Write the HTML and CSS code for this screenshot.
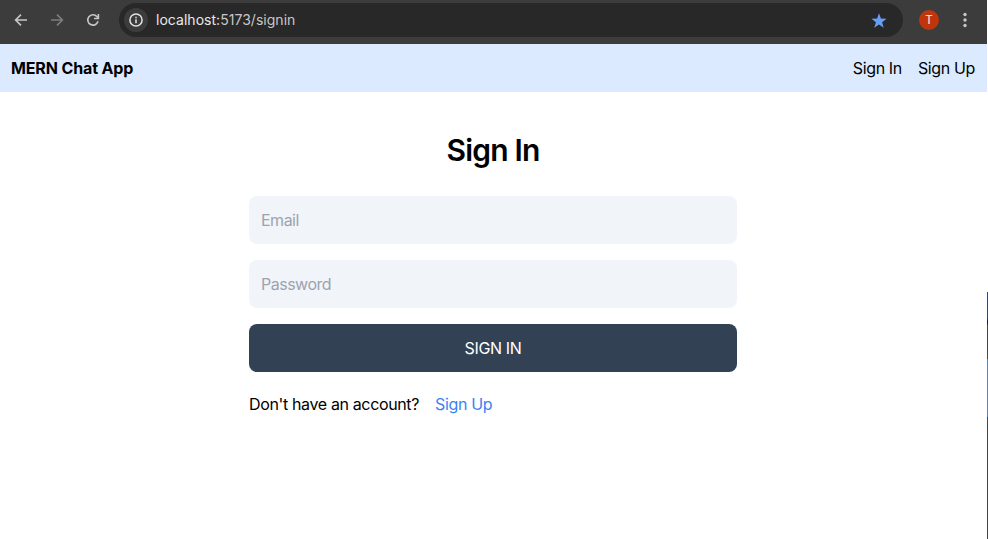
FILE: index.html
```html
<!DOCTYPE html>
<html lang="en">
<head>
<meta charset="utf-8">
<title>MERN Chat App</title>
<link rel="stylesheet" href="styles.css">
</head>
<body>
<div class="window">
  <div class="toolbar">
    <svg class="nav-icon" viewBox="0 0 16 16"><path d="M14 8H3M8 2.6 2.6 8 8 13.4"/></svg>
    <svg class="nav-icon disabled" viewBox="0 0 16 16"><path d="M2 8h11M8 2.6 13.4 8 8 13.4"/></svg>
    <svg class="nav-icon" viewBox="0 0 16 16"><path d="M13 9.3A5.2 5.2 0 1 1 11.9 4.5L13.4 6M13.4 2v4.5H9"/></svg>
    <div class="address">
      <span class="info"><svg viewBox="0 0 14 14"><circle cx="7" cy="7" r="6.1"/><path d="M7 6.3v4M7 3.7v1.5"/></svg></span>
      <span class="url"><b>localhost:</b>5173/signin</span>
      <svg class="star" viewBox="0 0 16 16"><path d="M8 .3 9.9 5.6l5.7.2-4.5 3.5 1.6 5.5L8 11.6l-4.7 3.2 1.6-5.5L.4 5.8l5.7-.2z"/></svg>
    </div>
    <span class="avatar">T</span>
    <svg class="menu" viewBox="0 0 4 16"><circle cx="2" cy="2.5" r="1.7"/><circle cx="2" cy="8" r="1.7"/><circle cx="2" cy="13.5" r="1.7"/></svg>
  </div>
  <header class="header">
    <h1 class="brand">MERN Chat App</h1>
    <nav class="links"><a class="signin">Sign In</a><a class="signup">Sign Up</a></nav>
  </header>
  <main class="content">
    <h2 class="title">Sign In</h2>
    <form class="form">
      <input class="field" type="email" placeholder="Email">
      <input class="field" type="password" placeholder="Password">
      <button class="submit" type="button">SIGN IN</button>
    </form>
    <div class="prompt"><span class="question">Don't have an account?</span><a class="signup accent">Sign Up</a></div>
  </main>
</div>
<div class="edge"></div>
</body>
</html>
```
FILE: styles.css
```css
* { box-sizing: border-box; }
body {
  margin: 0;
  height: 539px;
  overflow: hidden;
  display: flex;
  background: #fff;
  color: #000;
  font: 16px/24px Inter, "Liberation Sans", sans-serif;
  letter-spacing: -0.36px;
}
.window { width: 987px; }
.edge {
  width: 1px;
  background: linear-gradient(#fff 292px, #3b4080 292px 318px, #10101c 322px, #444 326px 359px, #4a88d4 359px 417px, #444 417px);
}
.toolbar {
  height: 44px;
  background: #3c3c3c;
  display: flex;
  align-items: center;
  padding: 0 20px 4px 13px;
  letter-spacing: 0;
}
.nav-icon {
  width: 16px;
  height: 16px;
  margin-right: 20px;
  fill: none;
  stroke: #c7c7c7;
  stroke-width: 1.6;
}
.nav-icon.disabled { stroke: #7d7d7d; }
.address {
  width: 784px;
  height: 34px;
  margin-left: -2px;
  border-radius: 17px;
  background: #282828;
  display: flex;
  align-items: center;
  padding: 0 16px 0 5px;
}
.info {
  width: 24px;
  height: 24px;
  border-radius: 50%;
  background: #3c3c3c;
  display: flex;
  align-items: center;
  justify-content: center;
}
.info svg { width: 14px; height: 14px; fill: none; stroke: #e3e3e3; stroke-width: 1.5; }
.url { margin-left: 8px; flex: 1; font-size: 14px; letter-spacing: 0.03px; color: #c7c7c7; }
.url b { font-weight: 400; color: #e8e8e8; }
.star { width: 16px; height: 16px; fill: #669df6; margin-top: 1px; }
.avatar {
  width: 20px;
  height: 20px;
  margin-left: 16px;
  border-radius: 50%;
  background: #bf360c;
  color: #f3d8cf;
  font-size: 11.5px;
  font-weight: 500;
  line-height: 20px;
  text-align: center;
}
.menu { width: 4px; height: 16px; margin-left: auto; fill: #c7c7c7; }
.header {
  height: 48px;
  padding: 0 12px 0 11px;
  background: #dbeafe;
  display: flex;
  align-items: center;
  justify-content: space-between;
}
.brand { margin: 0; font-size: 16px; font-weight: 700; line-height: 24px; letter-spacing: -0.13px; }
.links { display: flex; gap: 16px; }
.content { width: 488px; margin: 0 auto; padding: 40px 0 0; position: relative; left: -0.5px; }
.title { margin: 0; font-size: 30px; line-height: 36px; font-weight: 600; letter-spacing: -0.8px; text-align: center; }
.form { margin-top: 28px; display: flex; flex-direction: column; gap: 16px; }
.field, .submit { height: 48px; border: 0; border-radius: 8px; font: inherit; letter-spacing: -0.36px; padding: 12px; }
.field { background: #f1f5f9; letter-spacing: -0.5px; }
.field::placeholder { color: #9ca3af; opacity: 1; }
.submit { background: #334155; color: #fff; }
.prompt { margin-top: 20px; display: flex; gap: 16px; }
.accent { color: #3b82f6; }
```
